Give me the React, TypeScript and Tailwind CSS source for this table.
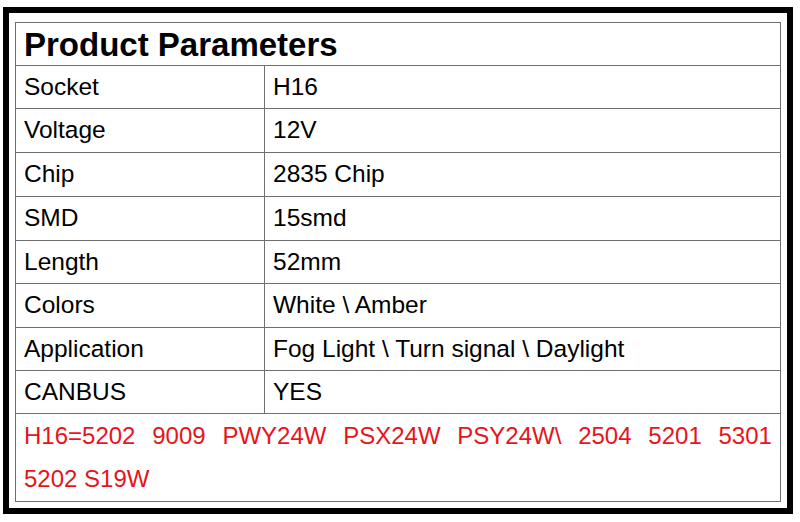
import React from 'react'

const rows: { label: string; value: string; h: string }[] = [
  { label: 'Socket', value: 'H16', h: 'h-[43px]' },
  { label: 'Voltage', value: '12V', h: 'h-[44px]' },
  { label: 'Chip', value: '2835 Chip', h: 'h-[44px]' },
  { label: 'SMD', value: '15smd', h: 'h-[44px]' },
  { label: 'Length', value: '52mm', h: 'h-[43px]' },
  { label: 'Colors', value: 'White \\ Amber', h: 'h-[44px]' },
  { label: 'Application', value: 'Fog Light \\ Turn signal \\ Daylight', h: 'h-[43px]' },
  { label: 'CANBUS', value: 'YES', h: 'h-[43px]' },
]

const models = ['H16=5202', '9009', 'PWY24W', 'PSX24W', 'PSY24W\\', '2504', '5201', '5301']

export default function App() {
  return (
    <div className="w-[800px] h-[522px] bg-white pt-[7px] pl-[3px] font-['Liberation_Sans',Arial,sans-serif] text-black">
      <div className="w-[790px] h-[507px] border-[6px] border-black pt-[9px] pl-[6px]">
        <div className="w-[766px] h-[480px] border border-[#707070] flex flex-col">
          {/* title */}
          <div className="h-[43px] border-b border-[#707070] flex items-center px-[8px]">
            <span className="text-[33px] font-bold leading-none">Product Parameters</span>
          </div>

          {rows.map((r) => (
            <div key={r.label} className={`${r.h} border-b border-[#707070] grid grid-cols-[249px_1fr] text-[24.5px] leading-none`}>
              <div className="border-r border-[#707070] flex items-center pl-[8px]">{r.label}</div>
              <div className="flex items-center pl-[8px]">{r.value}</div>
            </div>
          ))}

          {/* compatible models */}
          <div className="flex-1 flex flex-col text-[24px] leading-none text-[#e8141b] px-[8px]">
            <div className="h-[43px] flex items-center justify-between">
              {models.map((m) => (
                <span key={m}>{m}</span>
              ))}
            </div>
            <div className="h-[43px] flex items-center">5202 S19W</div>
          </div>
        </div>
      </div>
    </div>
  )
}
